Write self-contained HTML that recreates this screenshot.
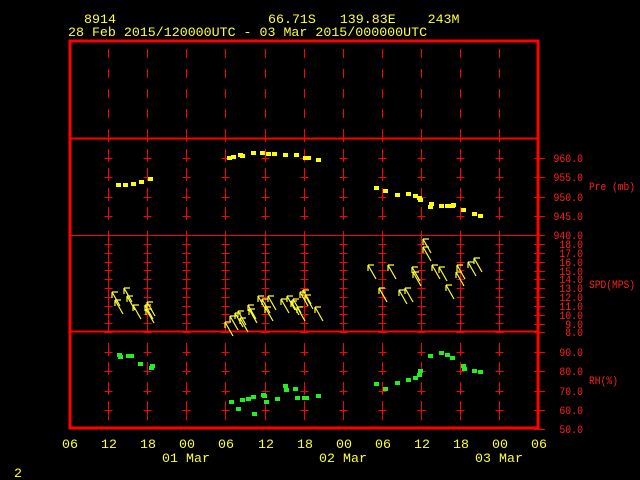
<!DOCTYPE html>
<html><head><meta charset="utf-8"><style>
html,body{margin:0;padding:0;background:#000;width:640px;height:480px;overflow:hidden}
svg{display:block}
text{font-family:"Liberation Mono",monospace}
</style></head><body>
<svg id="s" width="640" height="480" xmlns="http://www.w3.org/2000/svg">
<g fill="#ffff33" font-size="13.3">
<text x="84" y="23">8914</text>
<text x="268" y="23" xml:space="preserve">66.71S   139.83E    243M</text>
<text x="68" y="36">28 Feb 2015/120000UTC - 03 Mar 2015/000000UTC</text>
<text x="14" y="477">2</text>
</g>
<g fill="#ffff33" font-size="13.3" text-anchor="middle" id="xl"></g>
<g id="grid" stroke="#ff0000" stroke-width="1" fill="none" shape-rendering="crispEdges"></g>
<g fill="none" stroke="#ff0000" shape-rendering="crispEdges">
<rect x="70" y="41" width="468" height="387" stroke-width="3"/>
<line x1="70" y1="138.5" x2="538" y2="138.5" stroke-width="2"/>
<line x1="70" y1="235.5" x2="538" y2="235.5" stroke-width="1"/>
<line x1="70" y1="331.5" x2="538" y2="331.5" stroke-width="2"/>
</g>
<g id="rl" fill="#ff2020" font-size="11"></g>
<g fill="#ff2020" font-size="11">
<text x="589" y="190" textLength="46" lengthAdjust="spacingAndGlyphs">Pre (mb)</text>
<text x="589" y="288" textLength="46" lengthAdjust="spacingAndGlyphs">SPD(MPS)</text>
<text x="589" y="384" textLength="29" lengthAdjust="spacingAndGlyphs">RH(%)</text>
</g>
<g id="d"></g>
</svg>
<script>
var NS="http://www.w3.org/2000/svg";
function el(p,t,a,txt){var e=document.createElementNS(NS,t);for(var k in a)e.setAttribute(k,a[k]);if(txt!==undefined)e.textContent=txt;document.getElementById(p).appendChild(e);return e;}
var cols=[];for(var i=1;i<12;i++)cols.push(Math.round(69+i*39.1)+0.5);
var g="grid";
cols.forEach(function(x){for(var y=49;y<135;y+=20)el(g,"line",{x1:x,y1:y,x2:x,y2:y+9});
 el(g,"line",{x1:x,y1:138,x2:x,y2:142});el(g,"line",{x1:x,y1:231,x2:x,y2:331});});
var pre=[158,177,197,216];
var spd=[];for(var i=0;i<11;i++)spd.push(Math.round(244+i*8.8));
var rh=[352,371,391,410];
cols.forEach(function(x){
 pre.concat(rh).forEach(function(y){el(g,"line",{x1:x,y1:y-9,x2:x,y2:y+4});el(g,"line",{x1:x-4,y1:y+0.5,x2:x+4,y2:y+0.5});});
 spd.forEach(function(y){el(g,"line",{x1:x-4,y1:y+0.5,x2:x+4,y2:y+0.5});});
 el(g,"line",{x1:x,y1:414,x2:x,y2:420});
});
var lv=[[158,"960.0"],[177,"955.0"],[197,"950.0"],[216,"945.0"],[235,"940.0"],[244,"18.0"],[253,"17.0"],[262,"16.0"],[271,"15.0"],[279,"14.0"],[288,"13.0"],[297,"12.0"],[306,"11.0"],[315,"10.0"],[324,"9.0"],[332,"8.0"],[352,"90.0"],[371,"80.0"],[391,"70.0"],[410,"60.0"],[429,"50.0"]];
lv.forEach(function(v){el(g,"line",{x1:534,y1:v[0]+0.5,x2:545,y2:v[0]+0.5});
 var w=v[1].length*5.9;el("rl","text",{x:583-w,y:v[0]+4,textLength:w,lengthAdjust:"spacingAndGlyphs"},v[1]);});
var xl=["06","12","18","00","06","12","18","00","06","12","18","00","06"];
xl.forEach(function(t,i){el("xl","text",{x:Math.round(69+i*39.1)+1,y:448},t);});
[["01 Mar",186],["02 Mar",343],["03 Mar",499]].forEach(function(v){el("xl","text",{x:v[1],y:462},v[0]);});
var P=[[118,185],[125,185],[133,184],[141,182],[150,179],[229,158],[233,157],[240,155],[242,156],[253,153],[262,153],[268,154],[274,154],[285,155],[296,155],[305,158],[308,158],[318,160],[376,188],[385,191],[397,195],[408,194],[415,196],[419,198],[420,200],[430,207],[431,204],[441,206],[447,206],[452,206],[453,205],[463,210],[474,214],[480,216]];
P.forEach(function(p){el("d","rect",{x:p[0]-2,y:p[1]-2,width:5,height:4,fill:"#ffff00"});});
var R=[[119,355],[120,357],[128,356],[131,356],[140,364],[152,366],[151,368],[231,402],[238,409],[242,400],[248,399],[254,414],[253,397],[263,395],[264,396],[266,402],[277,399],[285,386],[286,390],[295,389],[297,398],[304,398],[306,398],[318,396],[376,384],[385,389],[397,383],[408,380],[415,378],[419,375],[420,371],[430,356],[441,353],[447,355],[452,358],[463,366],[464,369],[474,371],[480,372]];
R.forEach(function(p){el("d","rect",{x:p[0]-2,y:p[1]-2,width:5,height:4,fill:"#22ee22"});});
var W=[[112,292],[115,300],[124,288],[127,296],[133,305],[145,305],[147,302],[146,309],[225,322],[230,316],[235,313],[238,311],[240,318],[248,305],[249,309],[258,296],[262,299],[268,296],[265,307],[281,299],[287,296],[291,301],[293,299],[297,307],[300,292],[303,290],[305,295],[315,307],[368,265],[379,288],[388,265],[399,290],[405,288],[412,267],[413,272],[423,239],[423,247],[432,265],[439,267],[446,285],[456,272],[457,265],[468,262],[474,258]];
W.forEach(function(p){var x=p[0],y=p[1];el("d","path",{d:"M"+x+" "+y+"L"+(x+8)+" "+(y+14)+"M"+x+" "+y+"L"+(x+6)+" "+y+"M"+x+" "+y+"L"+x+" "+(y+6),stroke:"#ffff33","stroke-width":1.2,fill:"none"});});
</script>
</body></html>
